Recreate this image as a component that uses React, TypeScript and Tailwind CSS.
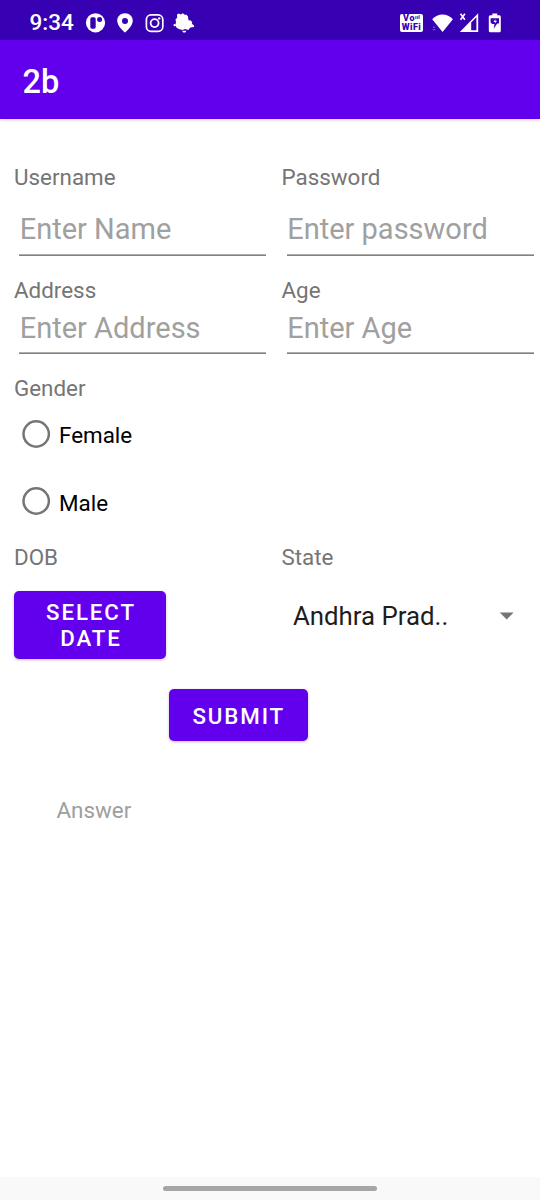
import React from "react";

function StatusBar() {
  return (
    <div className="flex h-10 items-start justify-between bg-[#3700b3] text-white">
      <div className="flex pl-[29.5px]">
        <span className="mt-[9px] w-[55px] text-[22.5px] leading-[27px] font-medium">9:34</span>
        <svg className="h-10 w-[125px]" viewBox="85 0 125 40" fill="none">
          <circle cx="95.5" cy="22.8" r="9.6" fill="#fff" />
          <rect x="90.3" y="17.3" width="5.4" height="11.4" rx="1.6" fill="#3700b3" />
          <circle cx="99.6" cy="19.4" r="2.5" fill="#3700b3" />
          <path
            fill="#fff"
            fillRule="evenodd"
            d="M125 13.2c-4.5 0-7.8 3.3-7.8 7.6 0 5.5 7.8 11.9 7.8 11.9s7.8-6.4 7.8-11.9c0-4.3-3.3-7.6-7.8-7.6zm0 4.7a3 3 0 1 1 0 6 3 3 0 0 1 0-6z"
          />
          <rect x="146.4" y="14.9" width="16.4" height="16.4" rx="4.6" stroke="#fff" strokeWidth="1.7" />
          <circle cx="154.6" cy="23.1" r="4" stroke="#fff" strokeWidth="1.8" />
          <circle cx="159.2" cy="18.4" r="1.2" fill="#fff" />
          <path
            fill="#fff"
            d="M177 14.6l2-1.2 1.6 1.2 2.2-1.4 2 1.5 1.7.1 1.4 1.5.6 4 2.4.3 1.4 2-.5 1.2 2.3 1.8v1.4l-3.8.4-2 2.5-3.2-.8-2.6 1-3-.9-2.6-1.2-1.7-2.6.8-3.4-.5-2.6 1.7-1.6z"
          />
          <path d="M182 30.8h4.4l-1 1.8h-2.2z" fill="#fff" />
          <circle cx="174.6" cy="25.2" r="1.1" fill="#fff" />
        </svg>
      </div>
      <div className="flex pr-[35px]">
        <div className="mt-[14px] flex h-[18px] w-[23px] flex-col items-center justify-between rounded-[2px] bg-white text-[#3700b3]">
          <span className="flex h-[9px] text-[9px] leading-[9px] font-black tracking-[0.6px]">
            Vo<span className="text-[6px] leading-[6px] font-bold tracking-normal">ııl</span>
          </span>
          <span className="h-[9px] text-[9px] leading-[9px] font-black tracking-[0.5px] whitespace-nowrap">WiFi</span>
        </div>
        <svg className="h-10 w-[82px]" viewBox="423 0 82 40" fill="none">
          <path d="M432.2 19.3c5.5-6.4 15.2-6.4 20.7 0L442.6 32z" fill="#fff" />
          <path d="M432.5 27.8l1.5-1.7 1.5 1.7zm0 1.3l1.5 1.7 1.5-1.7z" fill="#fff" fillOpacity=".35" />
          <path d="M460.5 13.8l4.4 6m0-6l-4.4 6" stroke="#fff" strokeWidth="1.6" />
          <path fillRule="evenodd" d="M478.2 13.3V32H459.8zM471.2 22.5v7.8h5.2V17.2z" fill="#fff" />
          <path d="M492.4 13.4h4.8v1.8h2.1q1.5 0 1.5 1.5v14q0 1.5-1.5 1.5h-9q-1.5 0-1.5-1.5v-14q0-1.5 1.5-1.5h2.1z" fill="#fff" />
          <path d="M490.6 18.2h8.4v5.2h-1.8l-3.5 5.4.8-4.7h-2.4l-1.5-1.7z" fill="#3700b3" />
          <path d="M495.4 18.9l-2 3h1.9l-.5 1.8 2.2-3h-1.8z" fill="#fff" />
        </svg>
      </div>
    </div>
  );
}

function Label({ text, className }: { text: string; className?: string }) {
  return (
    <div className={`text-[22.4px] leading-[26px] whitespace-nowrap text-[#757575] ${className ?? ""}`}>{text}</div>
  );
}

function Field({ hint, className }: { hint: string; className: string }) {
  return (
    <div
      className={`ml-[5px] flex w-[247px] flex-col justify-between pl-[0.7px] text-[29px] leading-[34px] whitespace-nowrap text-[#a0a0a0] ${className}`}
    >
      {hint}
      <div className="-ml-[0.7px] h-[2px] bg-linear-to-b from-[#c4c4c4] to-[#6c6c6c]" />
    </div>
  );
}

function Radio({ label }: { label: string }) {
  return (
    <div className="flex h-[67.5px] items-center pl-2 text-[22.4px] leading-[26px] text-black">
      <svg className="mr-[9px] size-7 shrink-0" viewBox="0 0 28 28" fill="none">
        <circle cx="14.2" cy="14" r="12.7" stroke="#757575" strokeWidth="2.5" />
      </svg>
      <span className="mt-[3px]">{label}</span>
    </div>
  );
}

export default function App() {
  return (
    <div className="flex h-[1200px] w-[540px] flex-col overflow-hidden bg-white font-['Roboto',sans-serif]">
      <StatusBar />
      <header className="flex h-[79px] items-center bg-[#6200ee] pl-[22.5px] text-[32.5px] font-medium text-white shadow-[0_1px_3px_rgba(0,0,0,0.2)]">
        <h1 className="mt-[4px] leading-[38px]">2b</h1>
      </header>

      <main className="flex flex-1 flex-col pt-[45px] pl-[14px]">
        <div className="grid grid-cols-[267.5px_1fr]">
          <Label text="Username" />
          <Label text="Password" />
          <Field hint="Enter Name" className="mt-[22px] h-[44px]" />
          <Field hint="Enter password" className="mt-[22px] h-[44px]" />
          <Label text="Address" className="mt-[21px]" />
          <Label text="Age" className="mt-[21px]" />
          <Field hint="Enter Address" className="mt-2 h-[43px]" />
          <Field hint="Enter Age" className="mt-2 h-[43px]" />
        </div>

        <Label text="Gender" className="mt-[21px]" />
        <div className="-mt-[1px] flex h-[143px] flex-col">
          <Radio label="Female" />
          <Radio label="Male" />
        </div>

        <div className="mt-[1px] grid grid-cols-[267.5px_1fr]">
          <Label text="DOB" />
          <Label text="State" />
          <div className="mt-[21px] flex h-[68px] w-[152px] flex-col items-center justify-center rounded-[5px] bg-[#6200ee] pl-[2px] text-[22.3px] leading-[26px] font-medium tracking-[1.9px] text-white shadow-[0_1px_3px_rgba(0,0,0,0.25)]">
            <span>SELECT</span>
            <span>DATE</span>
          </div>
          <div className="mt-[29px] flex h-[34px] items-center pr-[26px] pl-[11.5px] text-[25.8px] leading-[30px] text-[#1d1d1d]">
            <span className="mt-[-1px] grow whitespace-nowrap">Andhra Prad..</span>
            <svg className="mt-[-1px] h-[8px] w-[15px]" viewBox="0 0 15 8">
              <path d="M.8.4h13.8L7.7 7.5z" fill="#757575" />
            </svg>
          </div>
        </div>

        <div className="mt-[30px] ml-[155px] flex h-[52px] w-[138.5px] items-center justify-center rounded-[5px] bg-[#6200ee] pt-[2px] pl-[1px] text-[22.3px] leading-[26px] font-medium tracking-[1.9px] text-white shadow-[0_1px_3px_rgba(0,0,0,0.25)]">
          SUBMIT
        </div>
        <div className="mt-[56px] ml-[42.5px] text-[22.4px] leading-[26px] text-[#9e9e9e]">Answer</div>
      </main>

      <footer className="flex h-[23px] justify-center bg-[#f9f9f9] pt-[9px]">
        <div className="h-[5px] w-[214px] rounded-full bg-[#a6a6a6]" />
      </footer>
    </div>
  );
}
